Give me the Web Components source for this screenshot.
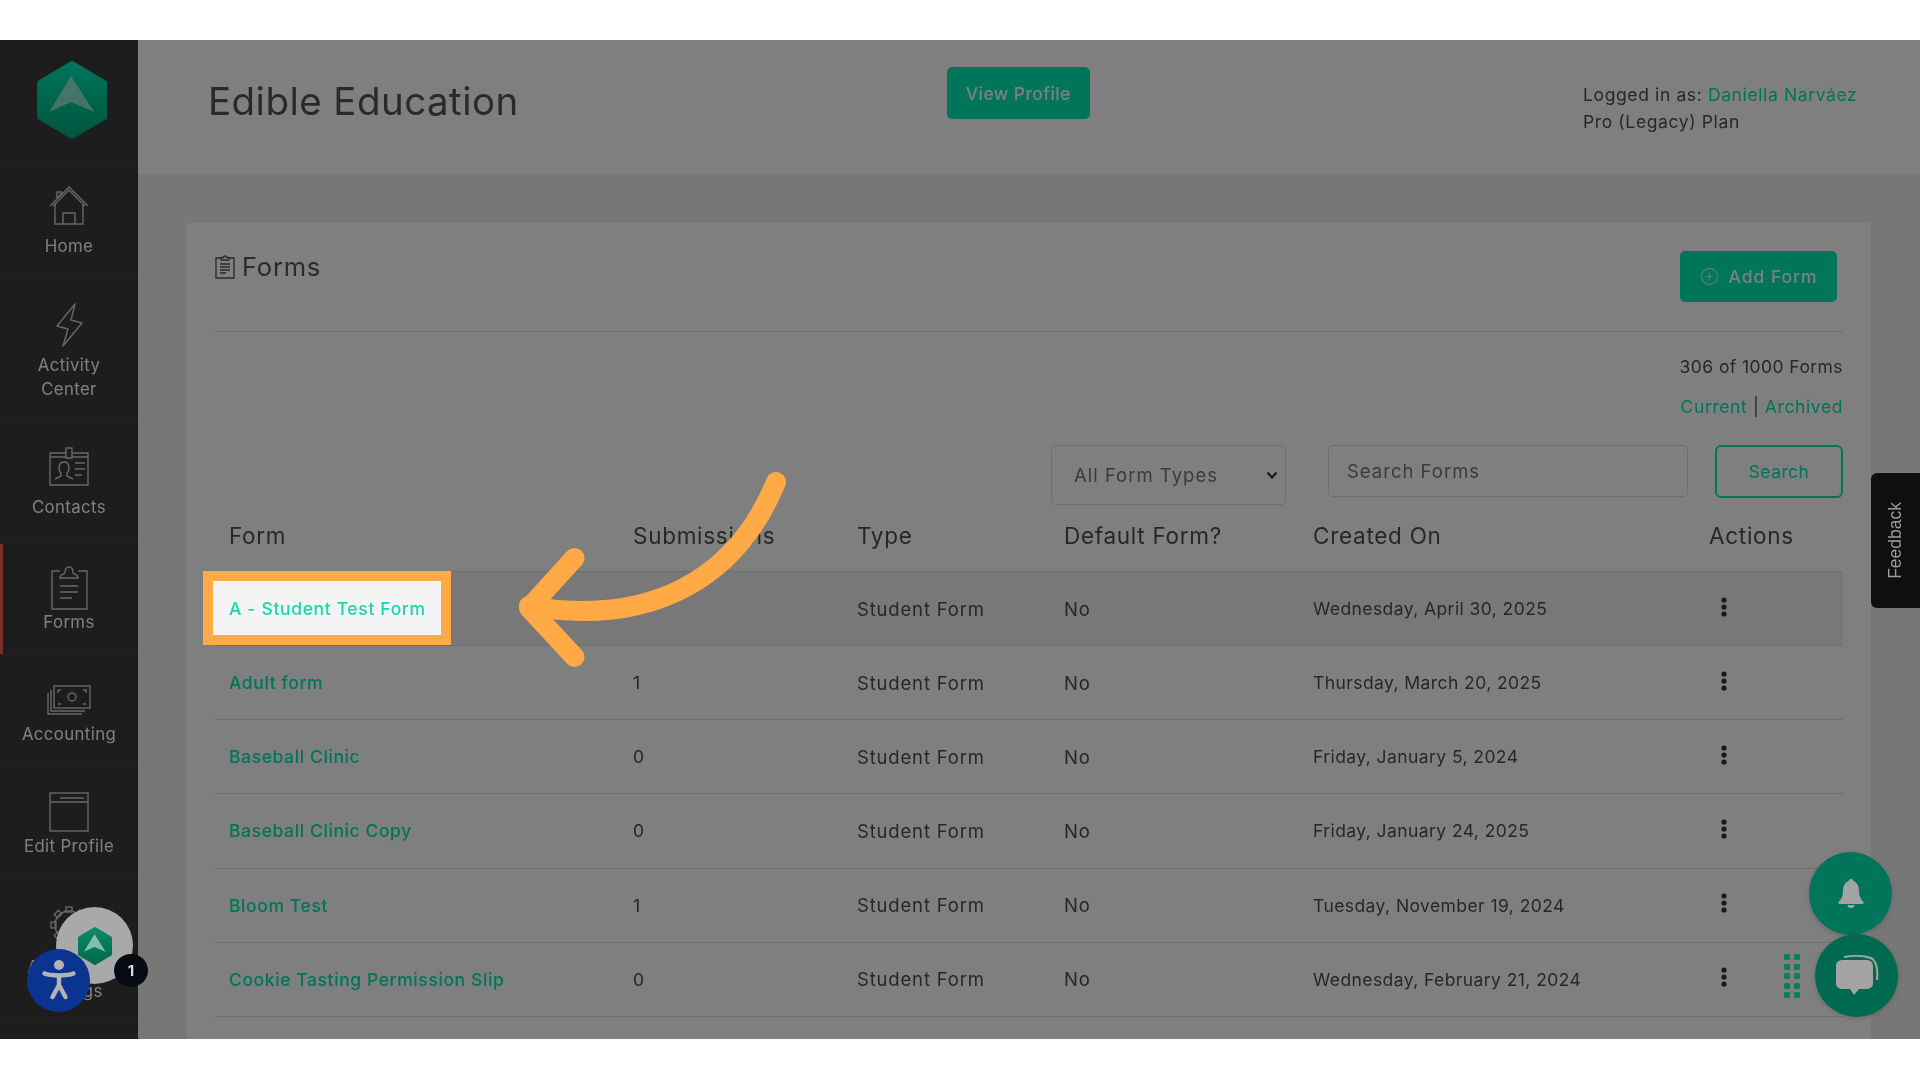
<!DOCTYPE html>
<html lang="en"><head><meta charset="utf-8"><title>Forms</title>
<style>
html,body{margin:0;background:#fff;height:1080px;overflow:hidden}
body{font-family:Inter,"Liberation Sans",sans-serif}
</style></head><body>
<tutorial-stage>
  <app-shell>
    <side-bar slot="side">
      <hex-logo size="78" style="--logo-pad:21px 0 21px 6px"></hex-logo>
      <nav-item h="119" pad="23" gap="7.25" label="Home"><svg viewBox="47 183 44 44" width="44" height="44" fill="none" stroke="#cfcfcf" stroke-width="1.4"><path d="M50 205 69 186 88 205M53 205 69 189 85 205M55 203V223H83V203M63 223V212H75V223M57 197V191H62"/><path d="M57 197 62 192"/></svg></nav-item>
      <nav-item h="142" pad="23" gap="7.25" label="Activity" label2="Center"><svg viewBox="47 302 44 44" width="44" height="44" fill="none" stroke="#cfcfcf" stroke-width="1.4" stroke-linejoin="round"><path d="M75 303 57 325 68 328 63 345 82 322 71 319Z"/></svg></nav-item>
      <nav-item h="122" pad="23" gap="7.25" label="Contacts"><svg viewBox="47 445 44 44" width="44" height="44" fill="none" stroke="#cfcfcf" stroke-width="1.4"><path d="M66 453H50V485H88V453H72M50 457H66M72 457H88M66 458V448H72V458Z"/><path d="M55 479 61 476V473C58 470 58 462 64 462 70 462 70 470 67 473V476L73 479M75 463H85M75 469H85M75 475H82"/></svg></nav-item>
      <nav-item h="111" active pad="22" gap="1.25" label="Forms"><svg viewBox="47 565 44 44" width="44" height="44" fill="none" stroke="#cfcfcf" stroke-width="1.4"><path d="M60 570H52V608H87V570H78M60 577C60 573 63 574 65 572 65 568 67 566 69 566 71 566 73 568 73 572 75 574 78 573 78 577Z"/><path d="M60 585H78M60 591H78M60 597H72"/></svg></nav-item>
      <nav-item h="113" pad="20" gap="4.25" label="Accounting"><svg viewBox="47 675 44 44" width="44" height="44" fill="none" stroke="#cfcfcf" stroke-width="1.4"><rect x="54" y="686" width="36" height="22"/><circle cx="72" cy="697" r="4"/><path d="M51 690V711H85M48 693V714H82M58 690H61M58 690V693M83 690H86V693M58 704H61M83 704H86"/></svg></nav-item>
      <nav-item h="112" pad="22" gap="1.25" label="Edit Profile"><svg viewBox="47 790 44 44" width="44" height="44" fill="none" stroke="#cfcfcf" stroke-width="1.4"><rect x="50" y="793" width="38" height="38"/><path d="M50 802H88M60 798H84" /></svg></nav-item>
      <nav-item h="143" pad="23" gap="9.25" label="Advanced" label2="Settings"><svg viewBox="47 902 44 44" width="44" height="44" fill="none" stroke="#cfcfcf" stroke-width="1.4"><circle cx="69" cy="924" r="14"/><g><rect x="66" y="906" width="6" height="5"/><rect x="66" y="906" width="6" height="5" transform="rotate(-45 69 924)"/><rect x="66" y="906" width="6" height="5" transform="rotate(-90 69 924)"/><rect x="66" y="906" width="6" height="5" transform="rotate(-135 69 924)"/><rect x="66" y="906" width="6" height="5" transform="rotate(45 69 924)"/></g></svg></nav-item>
    </side-bar>
    <page-header>
      <span slot="title">Edible Education</span>
      <green-btn slot="action" w="143.5" h="52">View Profile</green-btn>
      <span slot="who">Logged in as: <a style="color:#00eab4">Daniella Narváez</a></span>
      <span slot="plan">Pro (Legacy) Plan</span>
    </page-header>
    <forms-card>
      <card-title slot="head"></card-title>
      <green-btn slot="head" w="157" h="51" plus style="margin-right:6px">Add Form</green-btn>
      <filter-bar slot="filters"></filter-bar>
      <form-row head><span>Form</span><span>Submissions</span><span>Type</span><span>Default Form?</span><span>Created On</span><span>Actions</span></form-row>
      <form-row hover><span></span><span>0</span><span class="t">Student Form</span><span class="t">No</span><span>Wednesday, April 30, 2025</span><kebab-icon></kebab-icon></form-row>
      <form-row><a>Adult form</a><span>1</span><span class="t">Student Form</span><span class="t">No</span><span>Thursday, March 20, 2025</span><kebab-icon></kebab-icon></form-row>
      <form-row><a>Baseball Clinic</a><span>0</span><span class="t">Student Form</span><span class="t">No</span><span>Friday, January 5, 2024</span><kebab-icon></kebab-icon></form-row>
      <form-row><a>Baseball Clinic Copy</a><span>0</span><span class="t">Student Form</span><span class="t">No</span><span>Friday, January 24, 2025</span><kebab-icon></kebab-icon></form-row>
      <form-row><a>Bloom Test</a><span>1</span><span class="t">Student Form</span><span class="t">No</span><span>Tuesday, November 19, 2024</span><kebab-icon></kebab-icon></form-row>
      <form-row><a>Cookie Tasting Permission Slip</a><span>0</span><span class="t">Student Form</span><span class="t">No</span><span>Wednesday, February 21, 2024</span><kebab-icon></kebab-icon></form-row>
    </forms-card>
  </app-shell>
  <float-widgets slot="over"></float-widgets>
  <spot-light slot="over">A - Student Test Form</spot-light>
</tutorial-stage>
<script>
const GREEN='#00eab4';
function def(name,html){
  customElements.define(name,class extends HTMLElement{
    constructor(){super();this.attachShadow({mode:'open'})}
    connectedCallback(){
      if(this.shadowRoot.childNodes.length)return;
      this.shadowRoot.innerHTML=typeof html==='function'?html(this):html;
    }
  });
}
def('tutorial-stage',`<style>
:host{display:block;position:relative;margin-top:40px;height:999px;overflow:hidden;filter:blur(.45px)}
.dim{position:absolute;inset:0;background:rgba(0,0,0,.5)}
</style><slot></slot><div class="dim"></div><slot name="over"></slot>`);
def('app-shell',`<style>
:host{display:flex;height:999px;background:#eee;color:#4f4f4f;font-size:17.5px;letter-spacing:.42px}
.main{flex:1;min-width:0;display:flex;flex-direction:column}
</style><slot name="side"></slot><div class="main"><slot></slot></div>`);
def('side-bar',`<style>
:host{display:block;width:138px;flex:none;background:#3a3a3a;box-sizing:border-box}
</style><slot></slot>`);
def('hex-logo',h=>{const s=+h.getAttribute('size');return `<style>
:host{display:flex;justify-content:center;padding:var(--logo-pad,0);border-bottom:var(--logo-border,1px solid #444);box-sizing:border-box}
svg{display:block}
</style><svg width="${s*.9}" height="${s}" viewBox="37 61 70 78"><defs><linearGradient id="g" x1="0" y1="0" x2="0" y2="1"><stop offset="0" stop-color="#00e8b8"/><stop offset="1" stop-color="#00ab7c"/></linearGradient></defs>
<path d="M72 64 104 83V117L72 136 40 117V83Z" fill="url(#g)" stroke="url(#g)" stroke-width="6" stroke-linejoin="round"/>
<path d="M71 76 94 112 71 102 49 112Z" fill="#fff" fill-opacity=".55"/></svg>`});
def('nav-item',h=>{
  const a=k=>h.getAttribute(k);
  return `<style>
:host{display:flex;flex-direction:column;align-items:center;box-sizing:border-box;height:${a('h')}px;padding-top:${a('pad')}px;border-bottom:1px solid #444;position:relative;color:#fff;font-size:16.8px;line-height:23.5px;letter-spacing:.38px;font-weight:400;text-align:center}
.l{margin-top:${a('gap')}px}
::slotted(svg){display:block;flex:none}
.bar{position:absolute;left:0;top:0;bottom:0;width:3px;background:#ff5a5a}
</style>${h.hasAttribute('active')?'<div class="bar"></div>':''}<slot></slot><div class="l">${a('label')}${a('label2')?'<br>'+a('label2'):''}</div>`});
def('green-btn',h=>{
  const w=h.getAttribute('w'),H=h.getAttribute('h'),p=h.hasAttribute('plus');
  return `<style>
:host{display:inline-flex;flex:none;align-items:center;justify-content:center;gap:${p?10:8}px;width:${w}px;height:${H}px;background:${GREEN};color:#fff;border-radius:5px;font-size:17.5px;font-weight:500;letter-spacing:${p?'.95px':'.42px'}}
svg{display:block}
</style>${p?'<svg width="19" height="19" viewBox="0 0 19 19" fill="none" stroke="#fff" stroke-opacity=".7" stroke-width="1.3"><circle cx="9.5" cy="9.5" r="8"/><path d="M9.500 5.500v8M5.500 9.500h8"/></svg>':''}<slot></slot>`});
def('page-header',`<style>
:host{display:grid;grid-template-columns:70px 738.5px 143.5px 493px 1fr;height:134px;flex:none;background:#fff;box-sizing:border-box}
.t{grid-column:2;font-size:38.5px;font-weight:400;letter-spacing:.45px;color:#555;padding-top:36px;line-height:50px;white-space:nowrap}
.a{grid-column:3;padding-top:27px}
.w{grid-column-start:5;padding-top:41px;line-height:27px;white-space:nowrap;letter-spacing:.62px}
::slotted(span){display:block}
</style><div class="t"><slot name="title"></slot></div><div class="a"><slot name="action"></slot></div><div class="w"><slot name="who"></slot><slot name="plan"></slot></div>`);
def('card-title',`<style>
:host{display:flex;align-items:center;gap:7px;height:30px;font-size:25.5px;color:#555;letter-spacing:.8px}
svg{display:block;margin-top:2px}
</style><svg width="20" height="24" viewBox="0 0 20 24" fill="none" stroke="#555" stroke-width="1.3"><path d="M6 3H1V23H19V3H14M6 5V2.500H8.500A1.500 1.500 0 0 1 11.500 2.500H14V5Z"/><path d="M5 9H15M5 12H15M5 15H15M5 18H11"/></svg><span>Forms</span>`);
def('forms-card',`<style>
:host{display:block;margin:49px 49px 0;padding:28px 28px 0;background:#fff;flex:1}
.head{display:flex;justify-content:space-between;align-items:flex-start;height:80px;border-bottom:1px solid #ddd}
</style><div class="head"><slot name="head"></slot></div><slot name="filters"></slot><slot></slot>`);
def('filter-bar',`<style>
:host{display:block;text-align:right}
.c{padding-top:23px;line-height:24px}
.l{margin-top:16px;line-height:24px;letter-spacing:.6px}
.l a{color:${GREEN}}
.row{display:flex;justify-content:flex-end;align-items:flex-start;margin-top:26px;text-align:left}
.f{box-sizing:border-box;border:1px solid #ddd;border-radius:5px;display:flex;align-items:center;color:#777;font-size:18.5px;letter-spacing:1px}
.s{width:235px;height:60px;padding:0 7px 0 22px;justify-content:space-between;margin-right:42px}
.i{width:360px;height:52px;padding-left:18px;margin-right:27px}
.b{box-sizing:border-box;width:128px;height:53px;border:2px solid ${GREEN};border-radius:6px;color:${GREEN};display:flex;align-items:center;justify-content:center}
</style><div class="c">306 of 1000 Forms</div><div class="l"><a>Current</a> | <a>Archived</a></div>
<div class="row"><div class="f s"><span>All Form Types</span><svg width="12" height="9" viewBox="0 0 12 9" fill="none" stroke="#444" stroke-width="2.4"><path d="M1.500 1.500 6 6.500 10.500 1.500"/></svg></div><div class="f i">Search Forms</div><div class="b">Search</div></div>`);
def('form-row',h=>{const head=h.hasAttribute('head');return `<style>
:host{display:grid;grid-template-columns:404px 224px 207px 249px 396px 148px;box-sizing:border-box;height:${head?67:74.15}px;align-items:center;border-bottom:1px solid #ddd;${h.hasAttribute('hover')?'background:#f0f0f0;':''}${head?'font-size:22.5px;letter-spacing:.72px;padding-bottom:5px;':''}}
::slotted(*){padding-left:14px;white-space:nowrap}
::slotted(a){color:${GREEN};font-weight:500;letter-spacing:.6px}
::slotted(.t){font-size:18.5px;letter-spacing:.83px}
</style><slot></slot>`});
def('kebab-icon',`<style>
:host{display:block;margin-left:12px;margin-top:-4px}
svg{display:block}
</style><svg width="6" height="20" viewBox="0 0 6 20" fill="#333"><circle cx="3" cy="3" r="2.6"/><circle cx="3" cy="10" r="2.6"/><circle cx="3" cy="17" r="2.6"/></svg>`);
def('spot-light',`<style>
:host{position:absolute;left:203px;top:531px;box-sizing:border-box;width:248px;height:74px;border:10px solid #ffaa46;background:#f4f4f4;color:#19d6ad;padding-left:16px;font-size:17.5px;letter-spacing:.65px;font-weight:500;line-height:56px;white-space:nowrap}
svg{position:absolute;left:-213px;top:-541px;width:1920px;height:999px;pointer-events:none}
</style><slot></slot><svg viewBox="0 40 1920 999" fill="none" stroke="#ffaa46" stroke-width="20" stroke-linecap="round" stroke-linejoin="round"><path d="M776 482C738 575 655 628 529 606"/><path d="M574.500 558 529 608 574.500 657"/></svg>`);
def('float-widgets',`<style>
:host{position:absolute;inset:0;display:block;pointer-events:none}
.a{position:absolute}
.fb{left:1871px;top:433px;width:49px;height:135px;background:#0e0f11;border-radius:6px 0 0 6px;display:flex;align-items:center;justify-content:center}
.fb span{writing-mode:vertical-rl;transform:rotate(180deg);font:17.5px "Liberation Sans",sans-serif;color:#9a9a9a;letter-spacing:0}
.bell,.chat{width:83px;height:83px;border-radius:50%;display:flex;align-items:center;justify-content:center}
.bell{left:1809px;top:812px;background:#00755a;box-shadow:0 2px 5px rgba(0,0,0,.15)}
.chat{left:1815px;top:894px;background:#006a50;box-shadow:0 1px 5px rgba(0,0,0,.2)}
.dots{left:1784px;top:914px;display:grid;grid-template-columns:6px 6px;column-gap:4px;row-gap:3.5px}
.dots i{width:6px;height:6px;border-radius:1.5px;background:#0a7f60}
.grey{left:56px;top:867px;width:77px;height:77px;border-radius:50%;background:#a9a9a9;display:flex;align-items:center;justify-content:center}
.badge{left:114px;top:914px;width:34px;height:33px;border-radius:50%;background:#070a12;color:#ddd;font:700 15px Inter,sans-serif;display:flex;align-items:center;justify-content:center}
.acc{left:27px;top:909px;width:63px;height:63px;border-radius:50%;background:#0a3490;display:flex;align-items:center;justify-content:center}
</style>
<div class="a fb"><span>Feedback</span></div>
<div class="a grey"><svg width="34" height="38" viewBox="37 61 70 78"><defs><linearGradient id="g2" x1="0" y1="0" x2="0" y2="1"><stop offset="0" stop-color="#0a8a6c"/><stop offset="1" stop-color="#006a48"/></linearGradient></defs><path d="M72 64 104 83V117L72 136 40 117V83Z" fill="url(#g2)" stroke="url(#g2)" stroke-width="6" stroke-linejoin="round"/><path d="M71 76 94 112 71 102 49 112Z" fill="#fff" fill-opacity=".5"/></svg></div>
<div class="a badge">1</div>
<div class="a acc"><svg width="36" height="44" viewBox="0 0 36 44" fill="none" stroke="#b4b4b4" stroke-width="4.4" stroke-linecap="round" stroke-linejoin="round"><circle cx="18" cy="6" r="5" fill="#b4b4b4" stroke="none"/><path d="M3.500 14.500C10 17 26 17 32.500 14.500M18 17V26L11.500 38M18 26 24.500 38"/></svg></div>
<div class="a bell"><svg width="26" height="29" viewBox="0 0 26 29" fill="#a4a4a4"><circle cx="13" cy="2.500" r="2.500"/><path d="M13 2C7 2 5 7 5 12 5 17 3.500 20 .5 23 0 24 .5 25 2 25H24C25.500 25 26 24 25.500 23 22.500 20 21 17 21 12 21 7 19 2 13 2ZM9.500 26A3.500 3 0 0 0 16.500 26Z"/></svg></div>
<div class="a chat"><svg width="44" height="41" viewBox="0 0 44 41" fill="none"><path d="M9 2C20 0 30 1 36 3 42 6 43 14 42 25" stroke="#a4a4a4" stroke-width="2"/><path d="M8 5H31C35 5 38 7 38 11V28C38 32 35 34 31 34H24L19 40 15 34H8C4 34 1 32 1 28V11C1 7 4 5 8 5Z" fill="#a4a4a4"/></svg></div>
<div class="a dots"><i></i><i></i><i></i><i></i><i></i><i></i><i></i><i></i><i></i><i></i></div>`);
</script>
</body></html>
